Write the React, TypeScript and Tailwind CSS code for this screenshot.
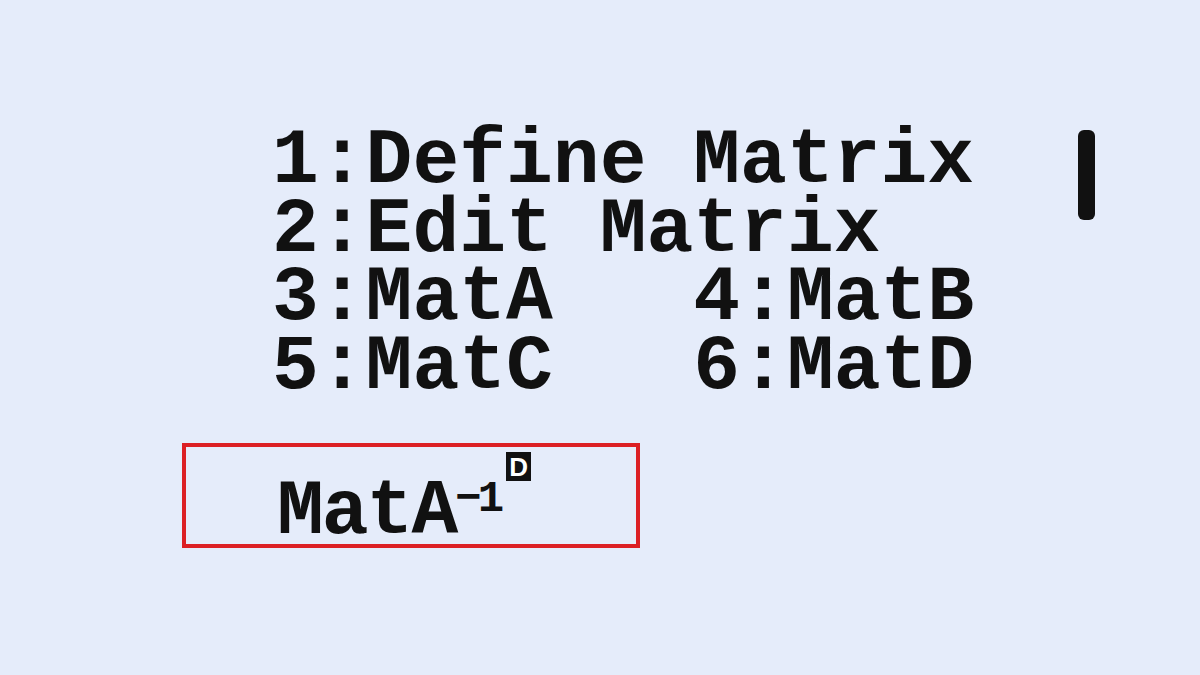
export default function App() {
  const rows = ["1:Define Matrix", "2:Edit Matrix", "3:MatA   4:MatB", "5:MatC   6:MatD"];

  return (
    <div
      className="w-[1200px] h-[675px] overflow-hidden bg-[#e5ecfa] text-[#111111] pt-[127px]"
      style={{ fontFamily: '"Liberation Mono", "DejaVu Sans Mono", monospace' }}
    >
      <div className="flex">
        <div className="pl-[272px] flex flex-col">
          {rows.map((r) => (
            <div key={r} className="text-[78px] leading-[68.5px] font-bold whitespace-pre">
              {r}
            </div>
          ))}
        </div>
        {/* scroll indicator */}
        <div className="ml-auto mr-[105px] mt-[3px] w-[17px] h-[90px] rounded-[6px] bg-[#111111]" />
      </div>

      <div className="ml-[182px] mt-[42px] w-[458px] h-[105px] border-4 border-[#dc1f24] pl-[91px] pt-[5px] flex items-start">
        <span className="mt-[26px] text-[78px] leading-[68px] font-bold tracking-[-2px] whitespace-pre">MatA</span>
        <span className="mt-[25px] ml-[-1px] text-[44px] leading-[44px] font-bold tracking-[-4px]">−1</span>
        <span
          className="ml-[6px] flex items-center justify-center w-[25px] h-[29px] bg-[#111111] text-white text-[26px] leading-none font-bold"
          style={{ fontFamily: '"Liberation Sans", Arial, sans-serif' }}
        >
          D
        </span>
      </div>
    </div>
  );
}
